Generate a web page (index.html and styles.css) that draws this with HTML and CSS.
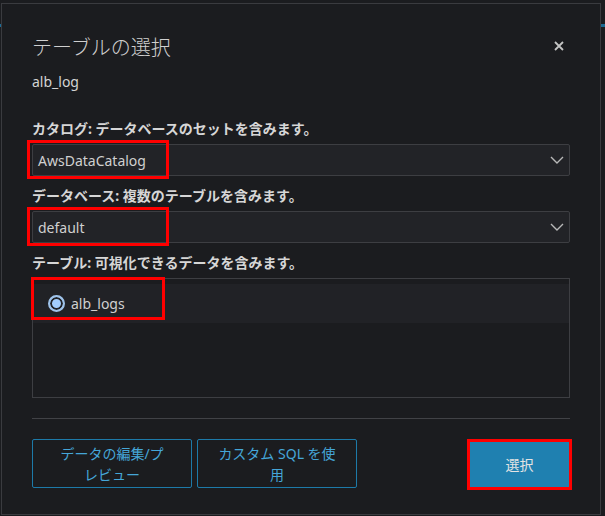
FILE: index.html
```html
<!DOCTYPE html>
<html lang="ja">
<head>
    <meta charset="UTF-8"/>
    <title>テーブルの選択</title>
    <link rel="stylesheet" href="styles.css">
</head>
<body>
    <div class="modal">
        <div class="modal-header">
            <h2 class="modal-title">テーブルの選択</h2>
            <span class="close">
                <svg width="10" height="10" viewBox="0 0 10 10"><path d="M1 1L9 9M9 1L1 9" stroke="#c4c4c4" stroke-width="1.8" fill="none"/></svg>
            </span>
        </div>
        <div class="subtitle">alb_log</div>

        <div class="form">
            <div class="field">
                <div class="field-label">カタログ: データベースのセットを含みます。</div>
                <div class="select">
                    <span class="select-value">AwsDataCatalog</span>
                    <svg class="chevron" width="14" height="8" viewBox="0 0 14 8"><path d="M1 1L7 7L13 1" stroke="#b8b8b8" stroke-width="1.4" fill="none"/></svg>
                    <span class="mark mark-select"></span>
                </div>
            </div>
            <div class="field">
                <div class="field-label">データベース: 複数のテーブルを含みます。</div>
                <div class="select">
                    <span class="select-value">default</span>
                    <svg class="chevron" width="14" height="8" viewBox="0 0 14 8"><path d="M1 1L7 7L13 1" stroke="#b8b8b8" stroke-width="1.4" fill="none"/></svg>
                    <span class="mark mark-select"></span>
                </div>
            </div>
            <div class="field">
                <div class="field-label">テーブル: 可視化できるデータを含みます。</div>
                <div class="list">
                    <div class="list-row selected">
                        <span class="radio"></span>
                        <span>alb_logs</span>
                    </div>
                    <span class="mark mark-row"></span>
                </div>
            </div>
        </div>

        <div class="divider"></div>

        <div class="footer">
            <button type="button" class="btn">データの編集/プ<br>レビュー</button>
            <button type="button" class="btn">カスタム SQL を使<br>用</button>
            <button type="button" class="btn btn-primary">選択</button>
        </div>
    </div>
</body>
</html>
```

FILE: styles.css
```css
html, body {
    margin: 0;
    padding: 0;
}
body {
    width: 605px;
    height: 516px;
    overflow: hidden;
    background: #1b1c1f linear-gradient(to bottom, transparent 24px, #1c6a93 24px, #1c6a93 27px, transparent 27px) no-repeat;
    font-family: "Noto Sans", "Noto Sans CJK JP", sans-serif;
    color: #d2d2d2;
    font-size: 14px;
}
.modal {
    box-sizing: border-box;
    width: 600px;
    margin: 3px 0 0 1px;
    padding: 29px 30px 24px;
    background: #1b1c1f;
    border: 1px solid #3a3b3f;
}
.modal-header {
    display: flex;
    align-items: center;
    justify-content: space-between;
}
.modal-title {
    margin: 0;
    font-family: "Noto Sans CJK JP", sans-serif;
    font-size: 20px;
    font-weight: 300;
    line-height: 28px;
    color: #cfcfcf;
}
.close {
    display: flex;
    margin-right: 6px;
    margin-top: -3px;
}
.subtitle {
    margin-top: 11px;
    line-height: 20px;
    color: #d4d4d4;
}
.form {
    margin-top: 27px;
    display: flex;
    flex-direction: column;
    gap: 10px;
}
.field-label {
    font-weight: bold;
    line-height: 20px;
    margin-bottom: 5px;
    color: #d6d6d6;
}
.select {
    position: relative;
    box-sizing: border-box;
    height: 32px;
    display: flex;
    align-items: center;
    justify-content: space-between;
    padding: 0 5px 0 5px;
    background: #222327;
    border: 1px solid #3d3e42;
    border-radius: 2px;
}
.select-value {
    color: #d0d0d0;
}
.list {
    position: relative;
    box-sizing: border-box;
    height: 120px;
    padding-top: 5px;
    border: 1px solid #3d3e42;
}
.list-row {
    height: 39px;
    display: flex;
    align-items: center;
    gap: 6px;
    padding-left: 15px;
    color: #d0d0d0;
}
.list-row.selected {
    background: #212226;
}
.radio {
    box-sizing: border-box;
    width: 17px;
    height: 17px;
    border-radius: 50%;
    border: 2px solid #9fc3ea;
    background: #a3cdfd;
    box-shadow: inset 0 0 0 2px #212226;
}
.mark {
    position: absolute;
    box-sizing: border-box;
    border: 3px solid #ff0000;
    pointer-events: none;
}
.mark-select {
    left: -6px;
    top: -5px;
    width: 142px;
    height: 39px;
}
.mark-row {
    left: -2px;
    top: -2px;
    width: 134px;
    height: 43px;
}
.divider {
    margin-top: 20px;
    height: 1px;
    background: #414246;
}
.footer {
    margin-top: 20px;
    display: flex;
    align-items: flex-start;
    gap: 5px;
}
.btn {
    box-sizing: border-box;
    width: 160px;
    height: 49px;
    padding: 0 20px;
    background: transparent;
    border: 1px solid #1d7aa8;
    border-radius: 2px;
    color: #45a6d8;
    font-family: inherit;
    font-size: 14px;
    line-height: 21px;
    cursor: pointer;
}
.btn-primary {
    width: 105px;
    height: 51px;
    margin-left: auto;
    margin-right: -2px;
    background: #1f80b0;
    border: 3px solid #ff0000;
    border-radius: 0;
    color: #e4e4e4;
}
```
